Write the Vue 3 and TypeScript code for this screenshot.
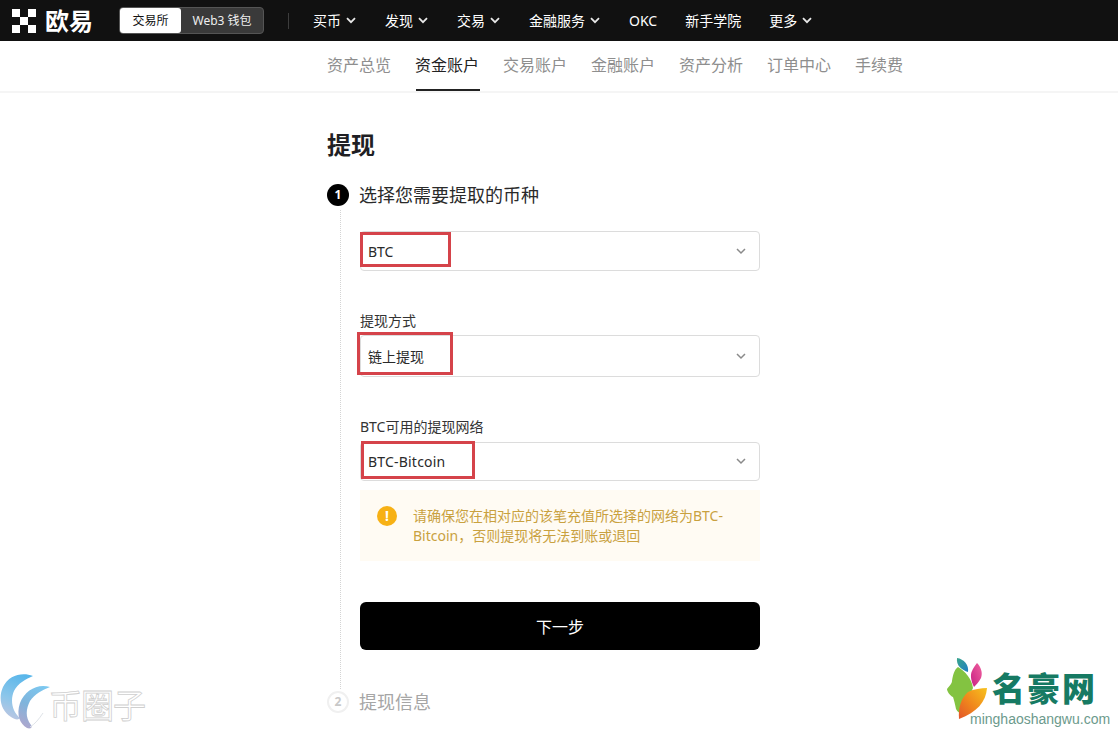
<script setup lang="ts">
const navItems: { label: string; arrow: boolean }[] = [
  { label: '买币', arrow: true },
  { label: '发现', arrow: true },
  { label: '交易', arrow: true },
  { label: '金融服务', arrow: true },
  { label: 'OKC', arrow: false },
  { label: '新手学院', arrow: false },
  { label: '更多', arrow: true },
]
const tabs: string[] = ['资产总览', '资金账户', '交易账户', '金融账户', '资产分析', '订单中心', '手续费']
</script>

<template>
  <div class="page">
    <header class="topbar">
      <div class="logo">
        <svg class="logo-mark" width="24" height="24" viewBox="0 0 24 24">
          <g fill="#fff">
            <rect x="0" y="0" width="8" height="8" />
            <rect x="16" y="0" width="8" height="8" />
            <rect x="8" y="8" width="8" height="8" />
            <rect x="0" y="16" width="8" height="8" />
            <rect x="16" y="16" width="8" height="8" />
          </g>
        </svg>
        <span class="logo-text">欧易</span>
      </div>
      <div class="switch">
        <span class="switch-on">交易所</span>
        <span class="switch-off">Web3 钱包</span>
      </div>
      <span class="divider"></span>
      <nav class="nav">
        <span v-for="item in navItems" :key="item.label" class="nav-item" :class="{ 'has-arrow': item.arrow }">
          {{ item.label }}
          <svg v-if="item.arrow" width="10" height="7" viewBox="0 0 10 7">
            <path d="M1 1.2 L5 5.2 L9 1.2" fill="none" stroke="#e8e8e8" stroke-width="1.8" />
          </svg>
        </span>
      </nav>
    </header>

    <div class="subnav">
      <span v-for="t in tabs" :key="t" class="tab" :class="{ active: t === '资金账户' }">{{ t }}</span>
    </div>

    <main class="content">
      <h1 class="title">提现</h1>

      <div class="step-head">
        <span class="num num-on">1</span>
        <span class="step-title">选择您需要提取的币种</span>
      </div>

      <div class="step-body">
        <div class="select s1">
          <span>BTC</span>
          <svg class="chev" width="10" height="7" viewBox="0 0 10 7"><path d="M1 1 L5 5 L9 1" fill="none" stroke="#8a8a8a" stroke-width="1.5" /></svg>
          <i class="mark m1"></i>
        </div>

        <label class="label l2">提现方式</label>
        <div class="select s2">
          <span>链上提现</span>
          <svg class="chev" width="10" height="7" viewBox="0 0 10 7"><path d="M1 1 L5 5 L9 1" fill="none" stroke="#8a8a8a" stroke-width="1.5" /></svg>
          <i class="mark m2"></i>
        </div>

        <label class="label l3">BTC可用的提现网络</label>
        <div class="select s3">
          <span>BTC-Bitcoin</span>
          <svg class="chev" width="10" height="7" viewBox="0 0 10 7"><path d="M1 1 L5 5 L9 1" fill="none" stroke="#8a8a8a" stroke-width="1.5" /></svg>
          <i class="mark m3"></i>
        </div>

        <div class="alert">
          <span class="alert-icon">!</span>
          <p class="alert-text">请确保您在相对应的该笔充值所选择的网络为BTC-Bitcoin，否则提现将无法到账或退回</p>
        </div>

        <button class="next">下一步</button>
      </div>

      <div class="step-head step2">
        <span class="num num-off">2</span>
        <span class="step-title off">提现信息</span>
      </div>
    </main>

    <div class="wm-left">
      <svg width="60" height="61" viewBox="0 0 60 61">
        <defs>
          <linearGradient id="swooshA" x1="0.7" y1="0" x2="0.4" y2="1">
            <stop offset="0" stop-color="#58b6ea" />
            <stop offset="0.6" stop-color="#8cc6ea" />
            <stop offset="1" stop-color="#b9c6e2" />
          </linearGradient>
          <linearGradient id="swooshB" x1="0.8" y1="0" x2="0.4" y2="1">
            <stop offset="0" stop-color="#7cc8f0" />
            <stop offset="0.55" stop-color="#7fb4dc" />
            <stop offset="1" stop-color="#a9a8cf" />
          </linearGradient>
        </defs>
        <path d="M33 6 C22 2 9 5 3 17 C-2 28 1 41 11 47 C15 50 19 50 20 48 C12 41 10 30 14 21 C18 13 26 9 33 6 Z" fill="url(#swooshA)" />
        <path d="M50 17 C38 13 25 20 20 33 C16 45 20 54 27 58 C30 59 33 58 31 55 C25 47 26 39 30 31 C35 24 42 20 50 17 Z" fill="url(#swooshB)" />
        <path d="M30 57 C35 54 39 49 43 43" fill="none" stroke="#dfe3e8" stroke-width="1" />
      </svg>
      <span class="wm-left-text">币圈子</span>
    </div>

    <div class="wm-right">
      <svg class="leaf" width="60" height="70" viewBox="0 0 60 70">
        <defs>
          <linearGradient id="leafA" x1="0" y1="0" x2="1" y2="1">
            <stop offset="0" stop-color="#3aa58c" />
            <stop offset="1" stop-color="#1f7fc4" />
          </linearGradient>
          <linearGradient id="leafB" x1="1" y1="0" x2="0" y2="1">
            <stop offset="0" stop-color="#f0629f" />
            <stop offset="1" stop-color="#c81f83" />
          </linearGradient>
          <linearGradient id="leafC" x1="1" y1="0" x2="0" y2="1">
            <stop offset="0" stop-color="#f7c21e" />
            <stop offset="0.55" stop-color="#f0861c" />
            <stop offset="1" stop-color="#e2552a" />
          </linearGradient>
        </defs>
        <path d="M13 12 C20 16 27 24 28 33 C25 40 21 48 19 58 C16 59 13 58 11 54 C10 49 9 45 8 42 C5 41 2 36 2 34 C4 31 7 29 7 26 C8 20 9 15 13 12 Z" fill="#83c341" />
        <path d="M12 3 C19 4 24 10 23 17 C17 15 11 11 12 3 Z" fill="url(#leafA)" />
        <path d="M32 8 C36 12 38 18 36 23 C34 27 31 30 29 32 C26 26 25 20 27 16 C28 13 30 11 32 8 Z" fill="url(#leafB)" />
        <path d="M42 33 C41 47 32 57 14 64 C13 53 16 43 23 37 C29 34 36 33 42 33 Z" fill="url(#leafC)" />
      </svg>
      <span class="wm-cn">名豪网</span>
      <span class="wm-en">minghaoshangwu.com</span>
    </div>
  </div>
</template>

<style>
html, body { margin: 0; background: #fff; }
</style>

<style scoped>
.page {
  position: relative;
  width: 1118px;
  height: 731px;
  overflow: hidden;
  background: #fff;
  font-family: "Noto Sans", "Noto Sans CJK SC", sans-serif;
  color: #222;
}
.topbar {
  display: flex;
  align-items: center;
  height: 41px;
  background: #111;
  color: #fff;
}
.logo { display: flex; align-items: center; width: 119px; padding-left: 12px; box-sizing: border-box; }
.logo-mark { flex: none; }
.logo-text { margin-left: 9px; font-size: 24px; font-weight: 700; line-height: 30px; }
.switch {
  display: flex;
  width: 145px;
  height: 27px;
  border: 1px solid #555;
  border-radius: 4px;
  background: #3a3a3a;
  box-sizing: border-box;
  font-size: 12px;
  line-height: 25px;
  text-align: center;
}
.switch-on { width: 61px; background: #fff; color: #111; border-radius: 3px; }
.switch-off { flex: 1; color: #eee; }
.divider { width: 1px; height: 16px; background: #3d3d3d; margin: 0 24px; }
.nav { display: flex; align-items: center; }
.nav-item {
  display: flex;
  align-items: center;
  gap: 5px;
  margin-right: 28px;
  font-size: 14px;
  line-height: 20px;
  white-space: nowrap;
}
.nav-item.has-arrow { margin-right: 29px; }
.subnav {
  display: flex;
  gap: 24px;
  height: 52px;
  padding-left: 327px;
  box-sizing: border-box;
  border-bottom: 2px solid #f5f5f5;
}
.tab {
  position: relative;
  height: 50px;
  font-size: 16px;
  line-height: 48px;
  color: #8e8e8e;
}
.tab.active { color: #222; }
.tab.active::after {
  content: "";
  position: absolute;
  left: 1px;
  right: -1px;
  bottom: 0;
  height: 2px;
  background: #222;
}
.content { padding-left: 327px; width: 433px; }
.title {
  margin: 0;
  padding-top: 35px;
  font-size: 24px;
  line-height: 34px;
  font-weight: 700;
  color: #1f1f24;
}
.step-head {
  display: flex;
  align-items: center;
  gap: 10px;
  margin-top: 20px;
  height: 26px;
}
.num {
  flex: none;
  width: 22px;
  height: 22px;
  border-radius: 50%;
  text-align: center;
  font-size: 12px;
  line-height: 22px;
  font-weight: 700;
}
.num-on { background: #000; color: #fff; }
.num-off { background: #fff; color: #c8c8c8; border: 2px solid #f0f0f0; box-sizing: border-box; line-height: 18px; }
.step-title { font-size: 18px; line-height: 26px; color: #2a2a2a; }
.step-title.off { color: #a6a6a6; }
.step-body {
  margin-left: 13px;
  padding-left: 19px;
  border-left: 1px dotted #d4d4d4;
  padding-top: 21px;
  padding-bottom: 39px;
  margin-top: 2px;
}
.select {
  position: relative;
  display: flex;
  align-items: center;
  justify-content: space-between;
  width: 400px;
  box-sizing: border-box;
  padding: 0 13px 0 7px;
  border: 1px solid #dcdcdc;
  border-radius: 4px;
  font-size: 14px;
  color: #2a2a2a;
}
.s1 { height: 40px; }
.s2 { height: 42px; }
.s3 { height: 39px; letter-spacing: 0.2px; }
.label { display: block; font-size: 14px; line-height: 18px; color: #333; }
.l2 { margin-top: 41px; margin-bottom: 5px; }
.l3 { margin-top: 41px; margin-bottom: 6px; }
.mark { position: absolute; border: 3px solid #d5434a; box-sizing: border-box; }
.m1 { left: -1px; top: 0; width: 91px; height: 35px; }
.m2 { left: -4px; top: -4px; width: 96px; height: 43px; }
.m3 { left: 0; top: -2px; width: 114px; height: 38px; }
.alert {
  display: flex;
  gap: 16px;
  margin-top: 9px;
  width: 400px;
  box-sizing: border-box;
  height: 71px;
  padding: 16px 18px 0 17px;
  background: #fffbf3;
}
.alert-icon {
  flex: none;
  width: 20px;
  height: 20px;
  border-radius: 50%;
  background: #f7b115;
  color: #fff;
  font-size: 14px;
  font-weight: 700;
  line-height: 20px;
  text-align: center;
}
.alert-text { margin: 0; font-size: 14px; line-height: 20px; color: #c9a13f; word-break: break-word; }
.next {
  display: block;
  width: 400px;
  height: 48px;
  margin-top: 41px;
  border: 0;
  border-radius: 6px;
  background: #000;
  color: #fff;
  font-family: inherit;
  font-size: 16px;
}
.step2 { margin-top: 0; }
.wm-left {
  position: absolute;
  left: 0;
  top: 670px;
  display: flex;
  align-items: center;
}
.wm-left-text {
  margin-left: -11px;
  margin-top: 10px;
  font-size: 33px;
  line-height: 40px;
  font-weight: 400;
  color: #fff;
  -webkit-text-stroke: 0.8px #cfcfcf;
  letter-spacing: -1px;
  white-space: nowrap;
}
.wm-right {
  position: absolute;
  left: 945px;
  top: 655px;
  width: 173px;
  height: 72px;
}
.leaf { position: absolute; left: 0; top: 0; }
.wm-cn {
  position: absolute;
  left: 47px;
  top: 14px;
  font-size: 33px;
  line-height: 36px;
  letter-spacing: 2px;
  font-weight: 900;
  font-family: "Noto Sans CJK SC", sans-serif;
  color: #167a63;
}
.wm-en {
  position: absolute;
  left: 25px;
  top: 56px;
  font-size: 14px;
  line-height: 16px;
  color: #6c9a8c;
  font-family: "Liberation Sans", sans-serif;
}
</style>
